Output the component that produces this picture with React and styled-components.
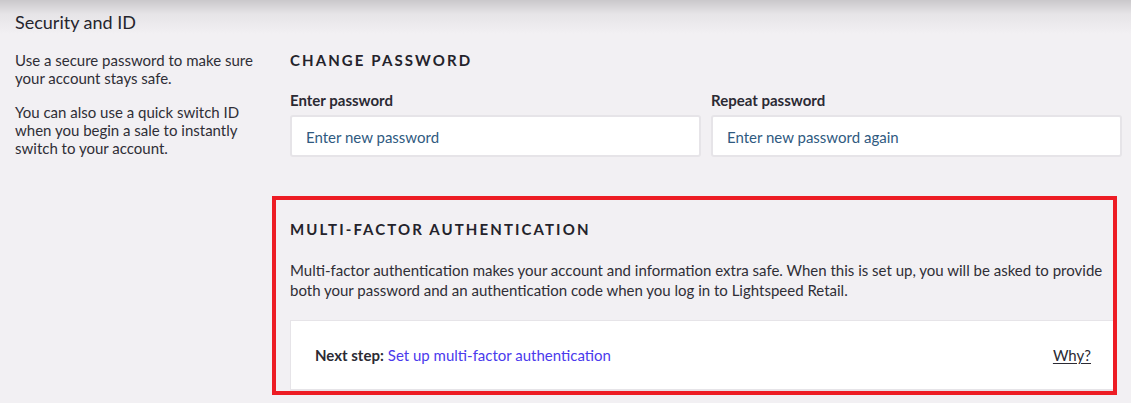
import React from 'react';
import styled, { createGlobalStyle } from 'styled-components';

const GlobalStyle = createGlobalStyle`
    html, body {
        margin: 0;
        padding: 0;
        background: linear-gradient(#cac8cb 0, #e6e4e7 14px, #f2f0f3 34px) #f2f0f3 no-repeat;
        min-height: 100%;
    }
    body {
        font-family: Lato, "Open Sans", sans-serif;
        color: #2b2a33;
        -webkit-font-smoothing: antialiased;
    }
`;

const Page = styled.div`
    padding: 11px 9px 0 15px;
    height: 403px;
    box-sizing: border-box;
`;

const Title = styled.h1`
    margin: 0;
    font-size: 18px;
    line-height: 22px;
    font-weight: 400;
    color: #26252d;
`;

const Layout = styled.div`
    display: grid;
    grid-template-columns: 255px 1fr;
    column-gap: 20px;
    margin-top: 18px;
`;

const Aside = styled.div`
    font-size: 15px;
    line-height: 18px;
    color: #2f2e36;

    p {
        margin: 0 0 16px;
    }
`;

const Main = styled.div`
    display: flex;
    flex-direction: column;
`;

const SectionHeading = styled.h2`
    margin: 0;
    font-size: 15px;
    line-height: 18px;
    font-weight: 700;
    letter-spacing: 2.1px;
    text-transform: uppercase;
    color: #24232b;
`;

const Fields = styled.div`
    display: grid;
    grid-template-columns: 1fr 1fr;
    column-gap: 10px;
    margin-top: 22px;
`;

const Field = styled.label`
    display: flex;
    flex-direction: column;
    gap: 6px;
`;

const Label = styled.span`
    font-size: 15px;
    line-height: 18px;
    font-weight: 700;
    color: #2b2a33;
`;

const Input = styled.input`
    height: 42px;
    box-sizing: border-box;
    border: 2px solid #e6e4e8;
    border-radius: 3px;
    background: #fff;
    padding: 1px 14px 0;
    font-family: inherit;
    font-size: 15px;
    color: #2b2a33;
    outline: none;

    &::placeholder {
        color: #2f5a7f;
        opacity: 1;
    }
`;

const Highlight = styled.section`
    margin: 39px 5px 0 -18px;
    border: 4px solid #ed1c24;
    padding: 20px 0 0 14px;
`;

const Description = styled.p`
    margin: 22px 0 20px;
    font-size: 15px;
    line-height: 20px;
    color: #2f2e36;
    padding-right: 10px;
`;

const StepCard = styled.div`
    display: flex;
    align-items: center;
    justify-content: space-between;
    height: 71px;
    box-sizing: border-box;
    background: #fff;
    border: 1px solid #e6e4e8;
    border-right: none;
    border-bottom-width: 2px;
    padding: 0 22px 0 24px;
    font-size: 15px;
`;

const StepLabel = styled.strong`
    font-weight: 700;
    color: #2b2a33;
    margin-right: 4px;
`;

const StepLink = styled.a`
    color: #4a3aed;
    text-decoration: none;
    cursor: pointer;
`;

const WhyLink = styled.a`
    color: #2b2a33;
    text-decoration: underline;
    text-underline-offset: 2px;
    cursor: pointer;
`;

export default function App() {
    return (
        <>
            <GlobalStyle />
            <Page>
                <Title>Security and ID</Title>
                <Layout>
                    <Aside>
                        <p>Use a secure password to make sure your account stays safe.</p>
                        <p>You can also use a quick switch ID when you begin a sale to instantly switch to your account.</p>
                    </Aside>
                    <Main>
                        <SectionHeading>Change password</SectionHeading>
                        <Fields>
                            <Field>
                                <Label>Enter password</Label>
                                <Input type="password" placeholder="Enter new password" />
                            </Field>
                            <Field>
                                <Label>Repeat password</Label>
                                <Input type="password" placeholder="Enter new password again" />
                            </Field>
                        </Fields>
                        <Highlight>
                            <SectionHeading>Multi-factor authentication</SectionHeading>
                            <Description>
                                Multi-factor authentication makes your account and information extra safe. When this is set up, you will be asked to provide both your password and an authentication code when you log in to Lightspeed Retail.
                            </Description>
                            <StepCard>
                                <span>
                                    <StepLabel>Next step:</StepLabel>
                                    <StepLink>Set up multi-factor authentication</StepLink>
                                </span>
                                <WhyLink>Why?</WhyLink>
                            </StepCard>
                        </Highlight>
                    </Main>
                </Layout>
            </Page>
        </>
    );
}
